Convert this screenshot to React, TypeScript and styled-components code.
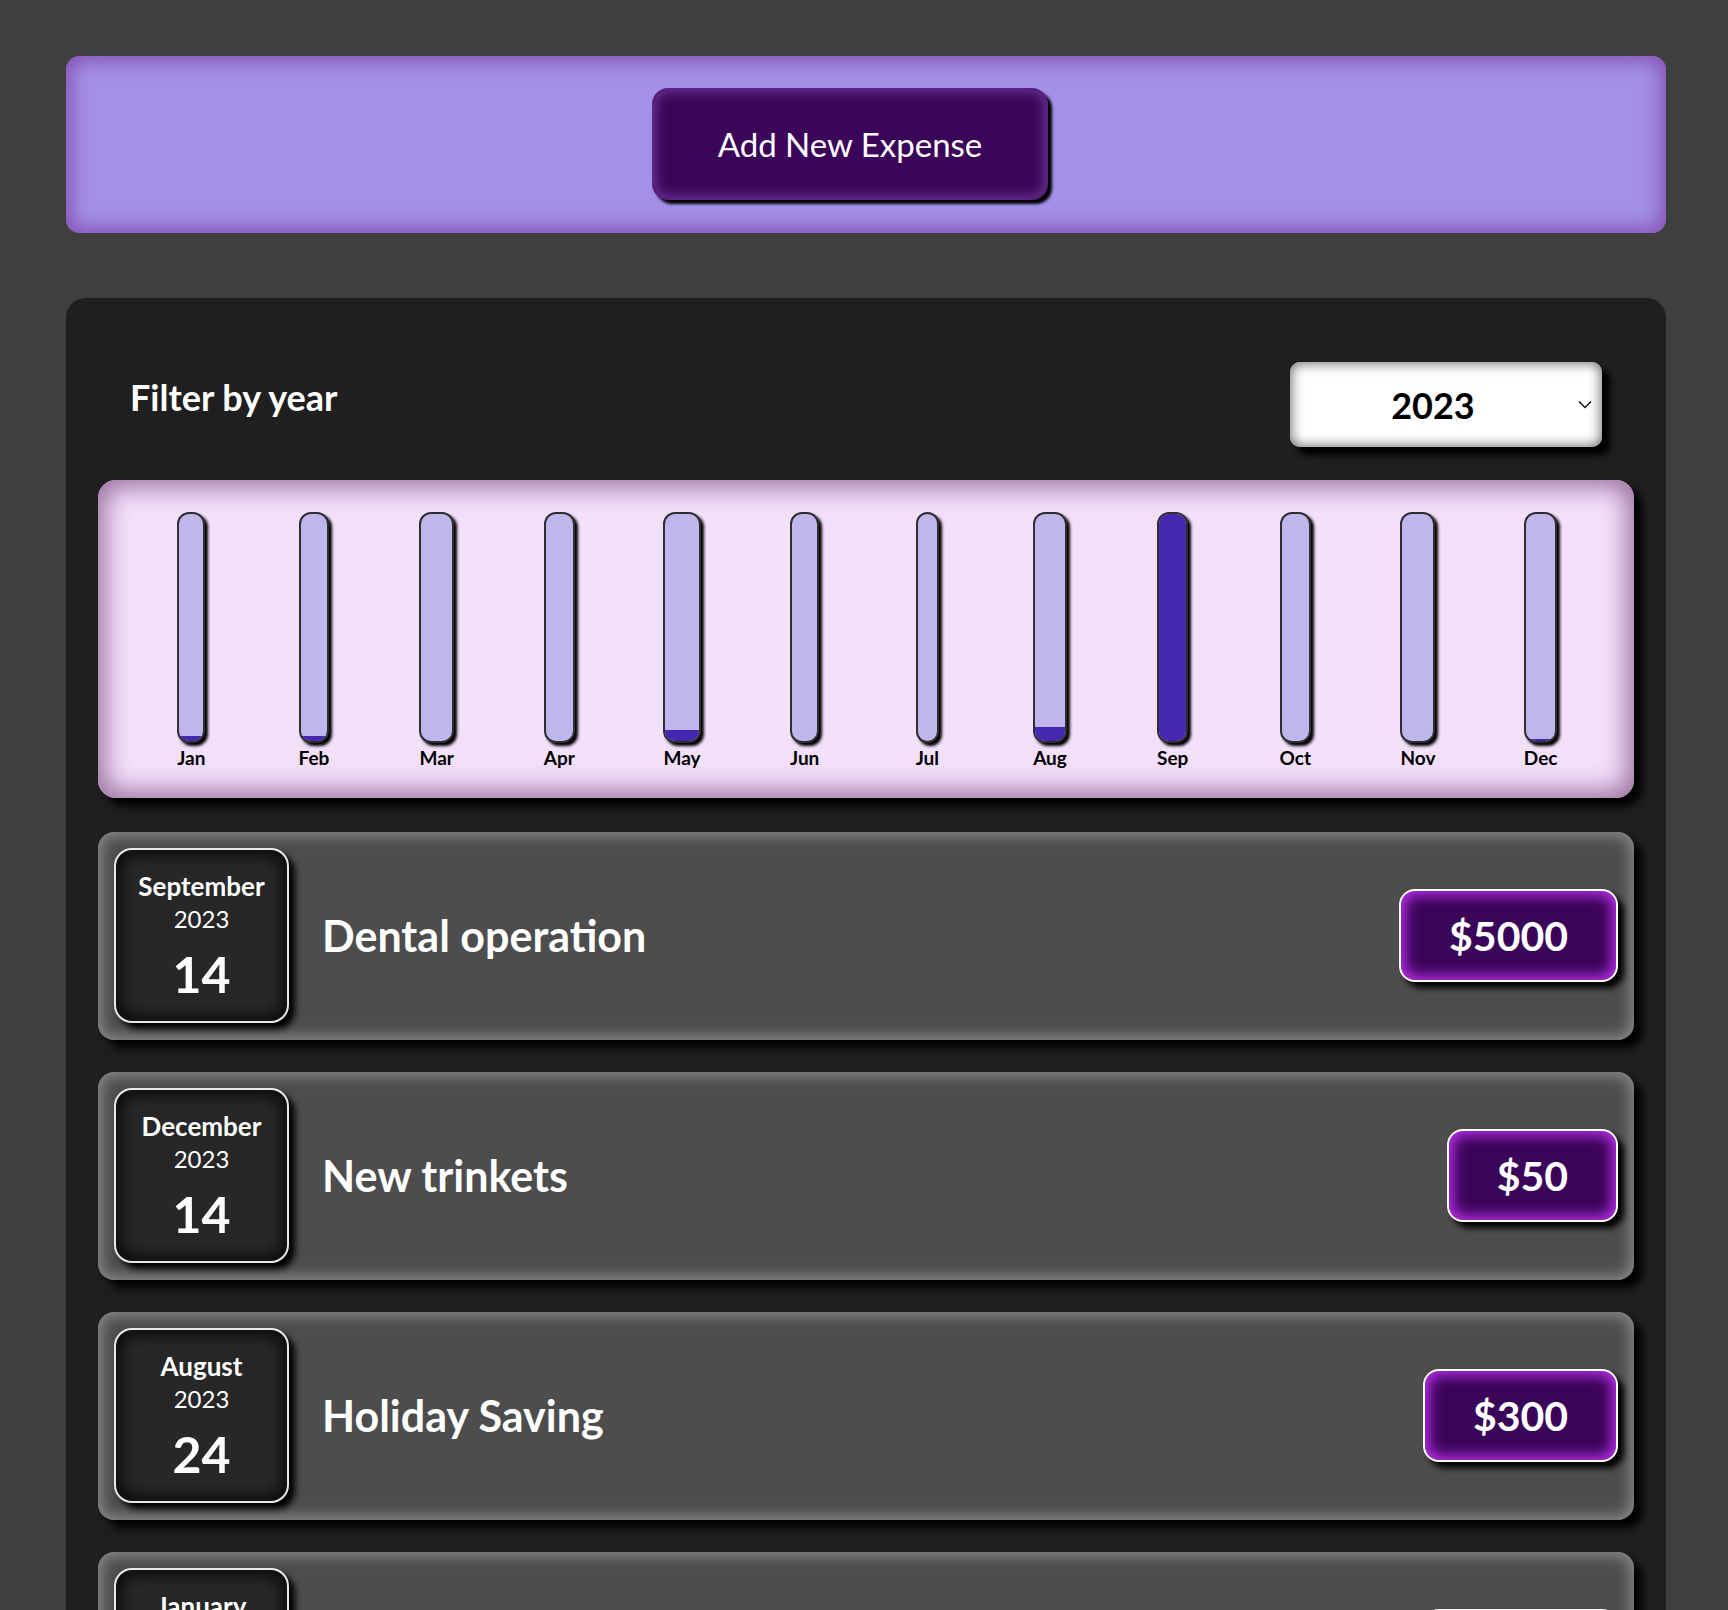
import React from 'react';
import styled, { createGlobalStyle } from 'styled-components';

const GlobalStyle = createGlobalStyle`
  html, body { margin: 0; padding: 0; background: #3f3f3f; }
  body { font-family: Lato, "Open Sans", sans-serif; }
  * { box-sizing: border-box; }
`;

const Page = styled.main`
  padding: 56px 62px 0 66px;
  display: flex;
  flex-direction: column;
  gap: 65px;
`;

const Header = styled.section`
  display: flex;
  justify-content: center;
  padding: 32px 32px 33px 0;
  background: #a391e9;
  border-radius: 14px;
  box-shadow: inset 0 0 20px 5px #8550b2;
`;

const AddButton = styled.button`
  font-family: inherit;
  font-size: 33px;
  font-weight: 400;
  line-height: 34px;
  color: #fff;
  background: #3b0659;
  border: 2px solid #5a2282;
  border-radius: 16px;
  padding: 37px 64px;
  box-shadow: inset 0 0 12px 2px #6e3596, 4px 4px 3px #000;
  cursor: pointer;
`;

const Card = styled.section`
  background: #1f1f1f;
  border-radius: 20px;
  padding: 32px 32px 0;
  display: flex;
  flex-direction: column;
`;

const FilterRow = styled.div`
  display: flex;
  justify-content: space-between;
  align-items: center;
  padding: 32px 32px 0;
  margin-bottom: 33px;
`;

const FilterLabel = styled.label`
  color: #fff;
  font-size: 36px;
  font-weight: 700;
  margin-top: -15px;
`;

const SelectWrap = styled.div`
  position: relative;
  width: 312px;
  height: 85px;
`;

const YearSelect = styled.select`
  appearance: none;
  -webkit-appearance: none;
  width: 100%;
  height: 100%;
  font-family: inherit;
  font-size: 36px;
  font-weight: 700;
  color: #000;
  background: #fff;
  border: none;
  border-radius: 10px;
  padding: 0 26px 0 0;
  text-align: center;
  text-align-last: center;
  box-shadow: inset 0 0 12px 2px #7a7a7a, 8px 8px 6px #000;
  outline: none;
`;

const Chevron = styled.svg`
  position: absolute;
  right: 10px;
  top: 38px;
  width: 14px;
  height: 9px;
  pointer-events: none;
`;

const Chart = styled.div`
  height: 318px;
  padding: 32px 32px 28px;
  display: grid;
  grid-template-columns: repeat(12, 1fr);
  background: #f3e0fb;
  border-radius: 18px;
  box-shadow: inset 0 0 26px 7px #9a6f9e, 8px 8px 8px #000;
  margin-bottom: 34px;
`;

const BarColumn = styled.div`
  display: flex;
  flex-direction: column;
  align-items: center;
  height: 100%;
`;

const BarStack = styled.div`
  display: flex;
  flex-direction: column;
  height: 100%;
`;

const BarTrack = styled.div`
  flex: 1;
  display: flex;
  flex-direction: column;
  justify-content: flex-end;
  overflow: hidden;
  background: #c1b5ed;
  border: 2px solid #2e2e2e;
  border-radius: 12px;
  box-shadow: 3px 3px 3px #000;
`;

const BarFill = styled.div`
  width: 100%;
  background: #4428b0;
`;

const BarLabel = styled.span`
  margin-top: 3px;
  font-size: 19px;
  font-weight: 700;
  line-height: 24px;
  color: #000;
  text-align: center;
`;

const ItemList = styled.ul`
  list-style: none;
  margin: 0;
  padding: 0;
  display: flex;
  flex-direction: column;
  gap: 32px;
`;

const Item = styled.li`
  display: flex;
  align-items: center;
  padding: 16px 16px 17px;
  background: #4d4d4d;
  border-radius: 16px;
  box-shadow: inset 0 0 14px 4px #888, 8px 8px 8px #000;
`;

const DateBox = styled.div`
  width: 175px;
  height: 175px;
  flex-shrink: 0;
  display: flex;
  flex-direction: column;
  align-items: center;
  justify-content: center;
  color: #fff;
  background: #272727;
  border: 2px solid #e8e8e8;
  border-radius: 18px;
  box-shadow: inset 0 0 18px 2px #000, 6px 6px 6px #000;
`;

const DateMonth = styled.div`
  font-size: 26px;
  font-weight: 700;
  line-height: 32px;
`;

const DateYear = styled.div`
  font-size: 24px;
  font-weight: 400;
  line-height: 30px;
  margin-top: 2px;
`;

const DateDay = styled.div`
  font-size: 50px;
  font-weight: 700;
  line-height: 56px;
  margin-top: 12px;
`;

const ItemTitle = styled.h2`
  flex: 1;
  margin: 0 0 0 33px;
  font-size: 43px;
  font-weight: 700;
  color: #fff;
`;

const Price = styled.div`
  padding: 19px 48px;
  font-size: 41px;
  font-weight: 700;
  line-height: 51px;
  color: #fff;
  background: #3a0558;
  border: 2px solid #fff;
  border-radius: 16px;
  box-shadow: inset 0 0 14px 4px #c030f0, 6px 6px 6px #000;
`;

const months = [
  { label: 'Jan', fill: 2 },
  { label: 'Feb', fill: 2 },
  { label: 'Mar', fill: 0 },
  { label: 'Apr', fill: 0 },
  { label: 'May', fill: 5 },
  { label: 'Jun', fill: 0 },
  { label: 'Jul', fill: 0 },
  { label: 'Aug', fill: 6 },
  { label: 'Sep', fill: 100 },
  { label: 'Oct', fill: 0 },
  { label: 'Nov', fill: 0 },
  { label: 'Dec', fill: 1 },
];

const expenses = [
  { month: 'September', year: '2023', day: '14', title: 'Dental operation', amount: '$5000' },
  { month: 'December', year: '2023', day: '14', title: 'New trinkets', amount: '$50' },
  { month: 'August', year: '2023', day: '24', title: 'Holiday Saving', amount: '$300' },
  { month: 'January', year: '2023', day: '10', title: 'Car Insurance', amount: '$100' },
];

export default function App() {
  return (
    <>
      <GlobalStyle />
      <Page>
        <Header>
          <AddButton type="button">Add New Expense</AddButton>
        </Header>
        <Card>
          <FilterRow>
            <FilterLabel htmlFor="year">Filter by year</FilterLabel>
            <SelectWrap>
              <YearSelect id="year" defaultValue="2023">
                <option value="2023">2023</option>
                <option value="2022">2022</option>
                <option value="2021">2021</option>
              </YearSelect>
              <Chevron viewBox="0 0 14 9">
                <path d="M1 1.5 L7 7.5 L13 1.5" fill="none" stroke="#111" strokeWidth="1.5" />
              </Chevron>
            </SelectWrap>
          </FilterRow>
          <Chart>
            {months.map((m) => (
              <BarColumn key={m.label}>
                <BarStack>
                  <BarTrack>
                    <BarFill style={{ height: `${m.fill}%` }} />
                  </BarTrack>
                  <BarLabel>{m.label}</BarLabel>
                </BarStack>
              </BarColumn>
            ))}
          </Chart>
          <ItemList>
            {expenses.map((e) => (
              <Item key={e.title}>
                <DateBox>
                  <DateMonth>{e.month}</DateMonth>
                  <DateYear>{e.year}</DateYear>
                  <DateDay>{e.day}</DateDay>
                </DateBox>
                <ItemTitle>{e.title}</ItemTitle>
                <Price>{e.amount}</Price>
              </Item>
            ))}
          </ItemList>
        </Card>
      </Page>
    </>
  );
}
